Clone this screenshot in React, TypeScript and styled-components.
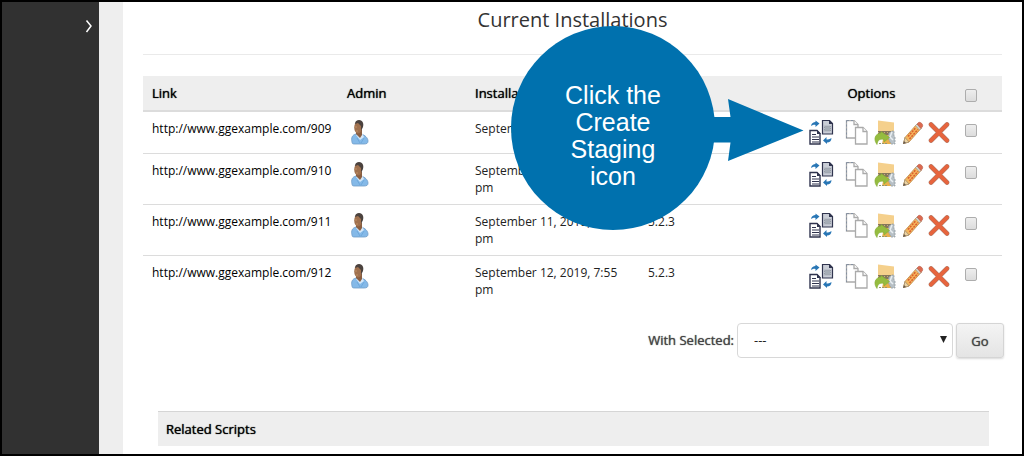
import React from 'react';
import styled, { createGlobalStyle, css } from 'styled-components';

const GlobalStyle = createGlobalStyle`
  *, *::before, *::after { box-sizing: border-box; }
  body {
    margin: 0;
    background: #fff;
    color: #222;
    font-family: "Open Sans", "Noto Sans", sans-serif;
    font-size: 12px;
    line-height: 17px;
  }
`;

const emphasis = css`
  font-size: 13px;
  font-weight: 500;
  text-shadow: 0 0 1px currentColor;
`;

const Page = styled.div`
  position: relative;
  display: flex;
  min-height: 100vh;
  border: 2px solid #000;
`;

const Sidebar = styled.aside`
  flex: 0 0 97px;
  display: flex;
  justify-content: flex-end;
  align-items: flex-start;
  padding: 16px 6px 0 0;
  background: #313131;
`;

const ExpandButton = styled.button`
  display: flex;
  padding: 0;
  border: 0;
  background: none;
  color: #fff;
`;

const Gutter = styled.div`
  flex: 0 0 24px;
  background: #eee;
`;

const Main = styled.main`
  flex: 1;
  min-width: 0;
  padding: 4px 20px 8px;
`;

const Title = styled.h1`
  margin: 0;
  padding-bottom: 20px;
  border-bottom: 1px solid #eaeaea;
  color: #333;
  font-size: 20px;
  font-weight: 400;
  line-height: 28px;
  text-align: center;
`;

const Table = styled.table`
  width: 100%;
  margin-top: 21px;
  border-collapse: separate;
  border-spacing: 0;
  table-layout: fixed;
`;

const Col = styled.col<{ $width?: number }>`
  width: ${(p) => (p.$width ? `${p.$width}px` : 'auto')};
`;

type Kind = 'text' | 'options' | 'check';

const sidePadding: Record<Kind, string> = {
  text: '9px',
  options: '0',
  check: '0',
};

const HeadCell = styled.th<{ $kind?: Kind }>`
  ${emphasis}
  height: 36px;
  padding: 0 ${(p) => (p.$kind === 'check' ? '11px' : sidePadding[p.$kind ?? 'text'])} 0 ${(p) => sidePadding[p.$kind ?? 'text']};
  border-bottom: 2px solid #dcdcdc;
  background: #eee;
  color: #000;
  text-align: ${(p) => (p.$kind ? 'center' : 'left')};
  vertical-align: middle;
`;

const Row = styled.tr`
  &:not(:last-child) > td { border-bottom: 1px solid #dcdcdc; }
`;

const Cell = styled.td<{ $kind?: Kind }>`
  padding: 8px ${(p) => (p.$kind === 'check' ? '11px' : sidePadding[p.$kind ?? 'text'])} 8px ${(p) => sidePadding[p.$kind ?? 'text']};
  vertical-align: top;
`;

const SiteLink = styled.a`
  color: #000;
  text-decoration: none;
`;

const IconLink = styled.a`
  display: inline-flex;
  vertical-align: top;
`;

const Options = styled.div`
  display: flex;
  justify-content: flex-end;
  gap: 4px;
`;

const Check = styled.input`
  appearance: none;
  display: block;
  width: 12px;
  height: 13px;
  margin: 4px auto 0;
  border: 1px solid #adadad;
  border-radius: 2px;
  background: linear-gradient(#eee, #dcdcdc);
`;

const Actions = styled.form`
  display: flex;
  justify-content: flex-end;
  align-items: center;
  gap: 3px;
  margin: 17px -2px 0 0;
  color: #444;
  font-size: 13px;
`;

const SelectWrap = styled.div`
  position: relative;
  display: flex;
`;

const Select = styled.select`
  appearance: none;
  width: 216px;
  height: 35px;
  padding: 0 16px;
  border: 1px solid #d8d8d8;
  border-radius: 4px;
  background: #fff;
  color: #222;
  font: inherit;
`;

const Caret = styled.svg`
  position: absolute;
  top: 13px;
  right: 6px;
  pointer-events: none;
`;

const GoButton = styled.button`
  width: 48px;
  height: 35px;
  border: 1px solid #d5d5d5;
  border-radius: 3px;
  background: linear-gradient(#f4f4f4, #e4e4e4);
  box-shadow: 0 1px 2px rgba(0, 0, 0, 0.15);
  color: #444;
  font-family: inherit;
  ${emphasis}
`;

const ActionLabel = styled.label`
  ${emphasis}
`;

const Related = styled.h2`
  ${emphasis}
  margin: 53px 13px 0 15px;
  padding: 9px 8px 8px;
  border-top: 1px solid #d5d5d5;
  background: #eee;
  color: #000;
`;

const Callout = styled.div`
  position: absolute;
  top: 24px;
  left: 509px;
  width: 293px;
  height: 204px;
  pointer-events: none;
`;

const CalloutShape = styled.svg`
  position: absolute;
  inset: 0;
`;

const CalloutText = styled.p`
  position: relative;
  width: 204px;
  margin: 0;
  padding: 56px 48px 0;
  color: #fff;
  font-family: "Liberation Sans", Arial, sans-serif;
  font-size: 25px;
  line-height: 27px;
  text-align: center;
`;

const PersonIcon = () => (
  <svg width="24" height="25" viewBox="0 0 24 25" aria-hidden="true">
    <path d="M5 22c-1-4 0-7 4-8h5c4 1 7 4 7 7 0 2-1 3-4 3H8c-2 0-3 0-3-2z" fill="#84b9e8" stroke="#6f9cc8" strokeWidth=".8" />
    <path d="M9 15l3-2 3 0 2 4-4 3z" fill="#d4e8fa" />
    <path d="M10 18l3 5M17 18l-3 5" stroke="#66a0d6" strokeWidth=".7" />
    <path d="M9 10h6v5l-2 3-4-4z" fill="#8a5f42" />
    <ellipse cx="11" cy="7.500" rx="3.800" ry="6" fill="#a0714f" />
    <path d="M8 4c0-3 2-4 4-4 4 0 5 4 4 7l-2 4V6l-3-3z" fill="#4b423e" />
    <path d="M8 7h2m-1 4h2" stroke="#c08f62" />
  </svg>
);

const StagingIcon = () => (
  <svg width="25" height="25" viewBox="0 0 25 25" aria-hidden="true">
    <path d="M13.500.5h7l3 3V14h-10z" fill="#c9cdd6" stroke="#30344e" strokeWidth="1.200" />
    <path d="M20 0v4h4z" fill="#30344e" />
    <path d="M15.500 6h6v5h-6z" fill="#a6adb6" stroke="#969da6" strokeDasharray="1 1" />
    <path d="M1 10.500h7l3 3V24H1z" fill="#fff" stroke="#30344e" strokeWidth="1.400" />
    <path d="M8 10v4h4z" fill="#30344e" />
    <path d="M3 14.500h4M3 17h7M3 19.500h7M3 22h7" stroke="#30344e" />
    <path d="M2 6c.5-3 2.500-4 4.500-4V.5L10.500 3.500 6.500 7V5C5 4.500 4 5 2 6z" fill="#2876b5" />
    <path d="M22.500 18c0 3-2 4.500-4.500 4.500V24L14 20.500 17.500 17v2.500c2 0 3-.5 5-1.500z" fill="#2876b5" />
  </svg>
);

const CopyIcon = () => (
  <svg width="25" height="25" viewBox="0 0 25 25" aria-hidden="true">
    <g fill="#fff" stroke="#aaa" strokeWidth="1.300">
      <path d="M1.500.5H9l4 4v13.500H1.500z" />
      <path d="M9 .5v4h4" />
      <path d="M10.500 7.500h7.500l4 4V24H10.500z" />
      <path d="M18 7.500v4h4" />
    </g>
    <path d="M1.500.5V18M2 .5h6" stroke="#8591a2" strokeDasharray="2 2" />
  </svg>
);

const BackupIcon = () => (
  <svg width="24" height="25" viewBox="0 0 24 25" aria-hidden="true">
    <path d="M4 .5l16 2V12H4z" fill="#f5d08c" />
    <path d="M4 11h13v4H4z" fill="#85765c" />
    <path d="M4 12.500h13" stroke="#c9ae7b" strokeDasharray="1 2" />
    <path d="M10 15h9v9H8z" fill="#eab04b" />
    <path d="M15 13l3-2h2v5l1 1v7h-4l-3-6z" fill="#b7c0c6" stroke="#939ca2" strokeWidth=".8" strokeDasharray="2 1" />
    <path d="M18 12l-2 5 3 3" stroke="#e8eef2" strokeWidth="1.500" fill="none" />
    <path d="M3 24.500c-4-5-2-11 4-11.500v-1.500l8.500 6-5.500 4.500v-2.500c-4-1-6.500.5-7 5z" fill="#95bc40" stroke="#87ae38" strokeWidth=".6" />
    <path d="M5 23.500h9" stroke="#969870" strokeDasharray="2 1" />
  </svg>
);

const PencilIcon = () => (
  <svg width="22" height="25" viewBox="0 0 22 25" aria-hidden="true">
    <path d="M1.500 23.500L3 17.500 15 4l4 4.500L7 22z" fill="#f5b65c" stroke="#c99a5c" />
    <path d="M1.500 23.500L3 17.500l4 4.500z" fill="#ecd3a2" stroke="#a28e70" strokeWidth=".8" />
    <path d="M1 24l1-3 2 2z" fill="#665a50" />
    <path d="M13.500 5.500L15 4l4 4.500L17.500 10z" fill="#d8d8cf" stroke="#999" strokeWidth=".6" />
    <path d="M15 4l1.500-1.500c2-1 5 2 4 4L19 8.500z" fill="#dc6a50" stroke="#b65c48" strokeWidth=".6" />
    <path d="M6 16.500L14 7.500M7.500 19l8.500-9.500" stroke="#dc6030" strokeWidth="1.700" strokeDasharray="2 1" />
  </svg>
);

const RemoveIcon = () => (
  <svg width="22" height="25" viewBox="0 0 22 25" aria-hidden="true">
    <path d="M3 4.500l16 16M19 4.500l-16 16" stroke="#ad7765" strokeWidth="4.600" strokeLinecap="round" />
    <path d="M3 4.500l16 16M19 4.500l-16 16" stroke="#e7643d" strokeWidth="3.800" strokeLinecap="round" />
  </svg>
);

const optionIcons = [
  { label: 'Create Staging', Icon: StagingIcon, space: 7 },
  { label: 'Clone', Icon: CopyIcon, space: 0 },
  { label: 'Backup', Icon: BackupIcon, space: 0 },
  { label: 'Edit', Icon: PencilIcon, space: 0 },
  { label: 'Remove', Icon: RemoveIcon, space: 0 },
];

const OptionLink = styled(IconLink)<{ $space: number }>`
  margin-right: ${(p) => p.$space}px;
`;

const installs = [
  { url: 'http://www.ggexample.com/909', date: 'September 9, 2019', version: '5.2.3' },
  { url: 'http://www.ggexample.com/910', date: 'September 10, 2019, 7:55 pm', version: '5.2.3' },
  { url: 'http://www.ggexample.com/911', date: 'September 11, 2019, 7:55 pm', version: '5.2.3' },
  { url: 'http://www.ggexample.com/912', date: 'September 12, 2019, 7:55 pm', version: '5.2.3' },
];

export default function App() {
  return (
    <Page>
      <GlobalStyle />
      <Sidebar>
        <ExpandButton type="button" aria-label="Expand menu">
          <svg width="8" height="16" viewBox="0 0 8 16" fill="none" stroke="currentColor" strokeWidth="1.500">
            <path d="M1.500 2.500L6 8l-4.500 6" />
          </svg>
        </ExpandButton>
      </Sidebar>
      <Gutter />
      <Main>
        <Title>Current Installations</Title>
        <Table>
          <colgroup>
            <Col />
            <Col $width={128} />
            <Col $width={173} />
            <Col $width={154} />
            <Col $width={157} />
            <Col $width={52} />
          </colgroup>
          <thead>
            <tr>
              <HeadCell>Link</HeadCell>
              <HeadCell>Admin</HeadCell>
              <HeadCell>Installation Time</HeadCell>
              <HeadCell>Version</HeadCell>
              <HeadCell $kind="options">Options</HeadCell>
              <HeadCell $kind="check">
                <Check type="checkbox" aria-label="Select all installations" />
              </HeadCell>
            </tr>
          </thead>
          <tbody>
            {installs.map((item) => (
              <Row key={item.url}>
                <Cell><SiteLink href="#">{item.url}</SiteLink></Cell>
                <Cell><IconLink href="#" aria-label="Admin"><PersonIcon /></IconLink></Cell>
                <Cell>{item.date}</Cell>
                <Cell>{item.version}</Cell>
                <Cell $kind="options">
                  <Options>
                    {optionIcons.map(({ label, Icon, space }) => (
                      <OptionLink key={label} href="#" aria-label={label} $space={space}>
                        <Icon />
                      </OptionLink>
                    ))}
                  </Options>
                </Cell>
                <Cell $kind="check">
                  <Check type="checkbox" aria-label={`Select ${item.url}`} />
                </Cell>
              </Row>
            ))}
          </tbody>
        </Table>
        <Actions onSubmit={(e) => e.preventDefault()}>
          <ActionLabel htmlFor="bulk">With Selected:</ActionLabel>
          <SelectWrap>
            <Select id="bulk"><option>---</option></Select>
            <Caret width="7" height="7" viewBox="0 0 7 7" aria-hidden="true">
              <path d="M0 0h7L3.500 7z" fill="#222" />
            </Caret>
          </SelectWrap>
          <GoButton type="submit">Go</GoButton>
        </Actions>
        <Related>Related Scripts</Related>
      </Main>
      <Callout>
        <CalloutShape width="293" height="204" viewBox="0 0 293 204" fill="#0071ae" aria-hidden="true">
          <circle cx="102" cy="102" r="102" />
          <path d="M200 91h19.500L217 73l75.500 31.500L217 135l2.500-18.500H200z" />
        </CalloutShape>
        <CalloutText>Click the Create Staging icon</CalloutText>
      </Callout>
    </Page>
  );
}
